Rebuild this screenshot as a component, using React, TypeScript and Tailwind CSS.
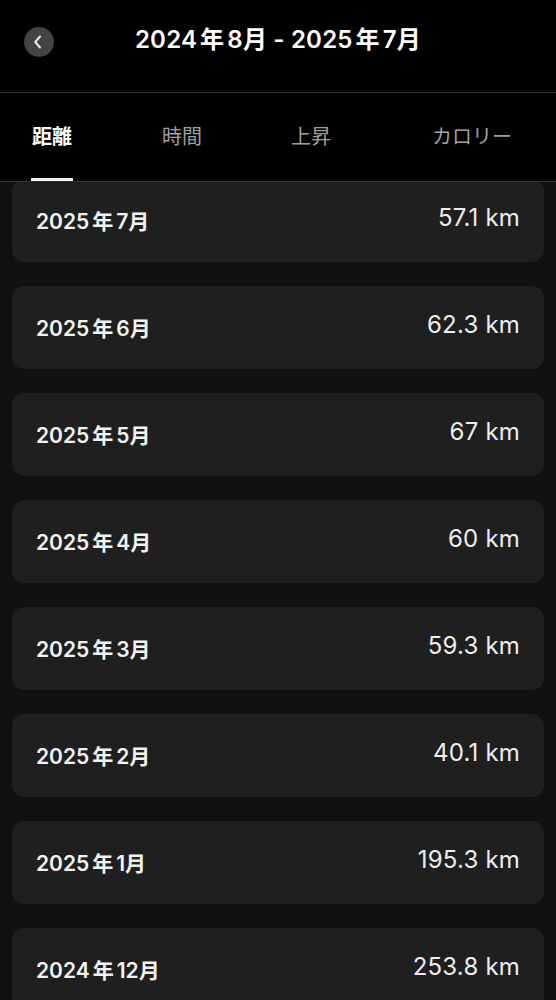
import * as React from "react";

const months = [
  { year: "2025", month: "7月", value: "57.1 km" },
  { year: "2025", month: "6月", value: "62.3 km" },
  { year: "2025", month: "5月", value: "67 km" },
  { year: "2025", month: "4月", value: "60 km" },
  { year: "2025", month: "3月", value: "59.3 km" },
  { year: "2025", month: "2月", value: "40.1 km" },
  { year: "2025", month: "1月", value: "195.3 km" },
  { year: "2024", month: "12月", value: "253.8 km" },
];

const tabs = [
  { name: "距離", cls: "ml-[32px]" },
  { name: "時間", cls: "ml-[90px]" },
  { name: "上昇", cls: "ml-[89px]" },
  { name: "カロリー", cls: "ml-[101px]" },
];

// year + 年 + month, with the little gaps the iOS font leaves around 年
function YearMonth({ year, month }: { year: string; month: string }) {
  return (
    <>
      {year}
      <span className="mx-[3px]">年</span>
      {month}
    </>
  );
}

function BackButton() {
  return (
    <button className="ml-[24px] mt-[27px] flex h-[30px] w-[30px] items-center justify-center rounded-full bg-[#444444]">
      <svg width="10" height="14" viewBox="0 0 10 14" className="-ml-[2px]">
        <polyline
          points="7,1.5 2.2,7 7,12.5"
          fill="none"
          stroke="#e8e8e8"
          strokeWidth="2"
          strokeLinecap="round"
          strokeLinejoin="round"
        />
      </svg>
    </button>
  );
}

export default function App() {
  const [activeTab, setActiveTab] = React.useState("距離");

  return (
    <div
      className="flex min-h-screen w-full flex-col bg-[#111111] text-white"
      style={{ fontFamily: '"Inter", "Noto Sans CJK JP", sans-serif' }}
    >
      {/* Header */}
      <div className="relative flex h-[93px] shrink-0 items-start border-b border-[#363636] bg-black">
        <BackButton />
        <div className="pointer-events-none absolute left-0 right-0 top-[26px] text-center text-[24px] font-semibold leading-[28px] tracking-[0.2px]">
          <YearMonth year="2024" month="8月" /> - <YearMonth year="2025" month="7月" />
        </div>
      </div>

      {/* Tabs */}
      <div className="flex h-[89px] shrink-0 items-stretch border-b border-[#333333] bg-black">
        {tabs.map((tab) => {
          const active = tab.name === activeTab;
          return (
            <button
              key={tab.name}
              onClick={() => setActiveTab(tab.name)}
              className={`relative flex items-center ${tab.cls} text-[20px] leading-none ${
                active ? "font-bold text-white" : "font-normal text-[#a0a0a0]"
              }`}
            >
              {tab.name}
              {active && (
                <span className="absolute bottom-0 left-[-1px] right-[-1px] h-[3px] bg-[#f2f2f2]" />
              )}
            </button>
          );
        })}
      </div>

      {/* Month list */}
      <div className="flex-1 overflow-hidden">
        <div className="-mt-[3px] flex flex-col gap-[24px] px-[12px]">
          {months.map((m) => (
            <div
              key={m.year + m.month}
              className="flex h-[83px] shrink-0 items-center justify-between rounded-[12px] bg-[#1f1f1f] px-[24px]"
            >
              <span className="mt-[2px] text-[21px] font-semibold text-[#f2f2f2]">
                <YearMonth year={m.year} month={m.month} />
              </span>
              <span className="mb-[6px] text-[24px] font-normal tracking-[0.2px] text-[#ededed]">
                {m.value}
              </span>
            </div>
          ))}
        </div>
      </div>
    </div>
  );
}
